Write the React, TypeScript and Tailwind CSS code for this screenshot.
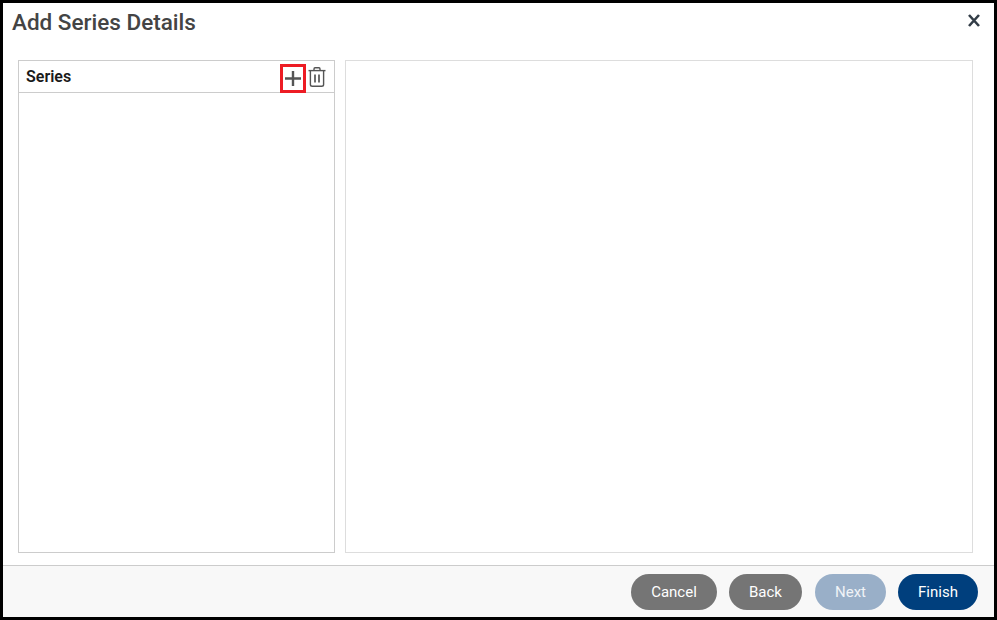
const FONT = "font-['Roboto',sans-serif]";

function TrashIcon() {
  return (
    <svg width="18" height="20" viewBox="0 0 18 20" fill="none" stroke="#555555" strokeWidth="1.4">
      <path d="M0.5 3.6h17" />
      <path d="M6 3.4V1.9C6 1.3 6.5.8 7 .8h4c.5 0 1 .5 1 1.1v1.5" />
      <path d="M2.4 3.6v13.9c0 1.1.8 1.8 1.9 1.8h9.4c1.1 0 1.9-.7 1.9-1.8V3.6" />
      <path d="M7 7.5v8M11 7.5v8" strokeWidth="1.7" />
    </svg>
  );
}

function PlusIcon() {
  return (
    <svg width="16" height="15" viewBox="0 0 16 15" fill="none" stroke="#555555" strokeWidth="2.4">
      <path d="M8 0v15M0 7.5h16" />
    </svg>
  );
}

function CloseIcon() {
  return (
    <svg width="12" height="13" viewBox="0 0 12 13" fill="none" stroke="#333d47" strokeWidth="2.6">
      <path d="M1 1l10 11M11 1L1 12" />
    </svg>
  );
}

function App() {
  const buttons = [
    { label: "Cancel", cls: "w-[86px] bg-[#757575] text-white" },
    { label: "Back", cls: "w-[73px] mr-[1px] bg-[#757575] text-white" },
    { label: "Next", cls: "w-[71px] bg-[#99afc8] text-[#f0f3f7]" },
    { label: "Finish", cls: "w-[80px] bg-[#003f7d] text-white" },
  ];

  return (
    <div className={`w-[997px] h-[620px] bg-white border-[3px] border-black flex flex-col overflow-hidden ${FONT}`}>
      <div className="h-[39px] shrink-0 flex items-start justify-between pl-[9px] pr-[14px]">
        <span className="text-[22.5px] leading-[38px] font-medium text-[#444444]">Add Series Details</span>
        <div className="mt-[11px]">
          <CloseIcon />
        </div>
      </div>

      <div className="flex-1 flex gap-[10px] pl-[15px] pr-[21px] pt-[18px] pb-[12px]">
        <div className="w-[317px] border border-[#cccccc] flex flex-col">
          <div className="h-[32px] shrink-0 border-b border-[#cccccc] flex items-center justify-between pl-[7px] pr-[8px]">
            <span className="text-[16px] font-semibold text-[#1a1a1a]">Series</span>
            <div className="flex items-center gap-[2px]">
              <div className="w-[26px] h-[29px] mt-[3px] border-[3px] border-[#ed1c24] flex items-center justify-center">
                <PlusIcon />
              </div>
              <TrashIcon />
            </div>
          </div>
        </div>
        <div className="flex-1 border border-[#dddddd]" />
      </div>

      <div className="h-[52px] shrink-0 border-t border-[#cccccc] bg-[#f8f8f8] flex items-center justify-end gap-[12px] pr-[16px]">
        {buttons.map((b) => (
          <button
            key={b.label}
            type="button"
            className={`h-[36px] pt-[1px] rounded-[18px] text-[15px] font-[450] ${b.cls}`}
          >
            {b.label}
          </button>
        ))}
      </div>
    </div>
  );
}

export default App;
